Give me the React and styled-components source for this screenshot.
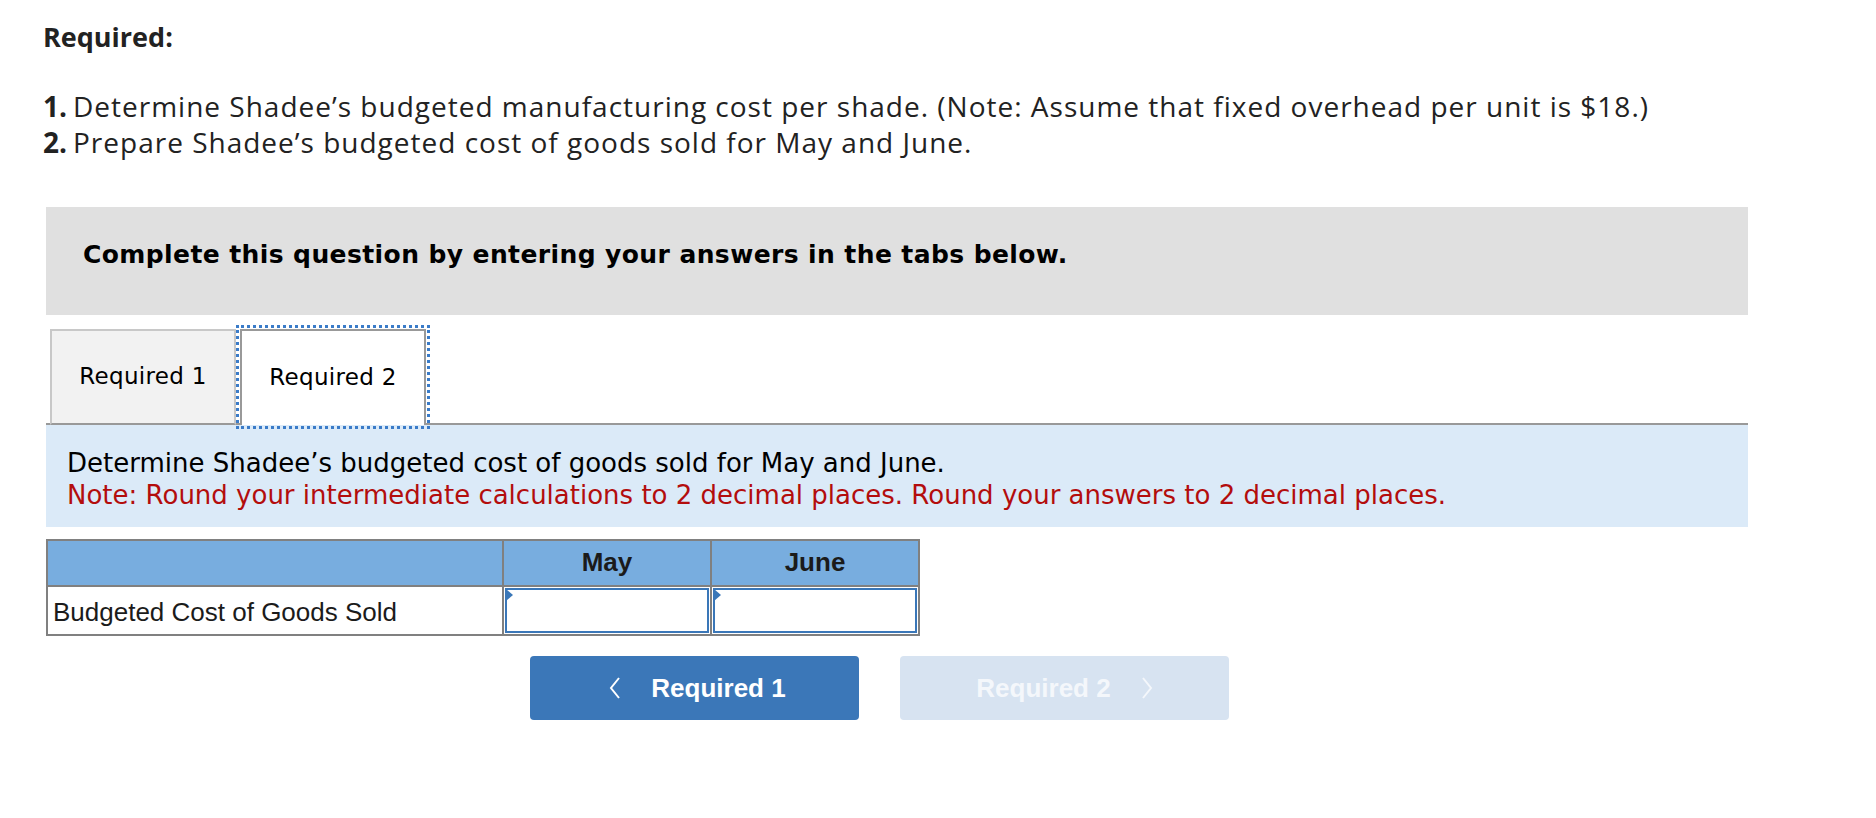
import styled, { createGlobalStyle } from "styled-components";

const Global = createGlobalStyle`
  body {
    margin: 0;
    background: #ffffff;
    font-family: "Open Sans", "Liberation Sans", sans-serif;
    color: #222;
  }
`;

const Page = styled.div`
  width: 1702px;
  padding: 19px 0 0 46px;
`;

// Question text
const Heading = styled.div`
  font-family: "Open Sans", sans-serif;
  font-weight: 700;
  font-size: 27px;
  line-height: 36px;
  margin-left: -3px;
  color: #222;
`;

const List = styled.div`
  margin-top: 33px;
  margin-left: -5px;
  font-family: "Open Sans", sans-serif;
  font-size: 28px;
  line-height: 36px;
  letter-spacing: 1px;
  color: #222;
`;

const Num = styled.b`
  display: inline-block;
  width: 26px;
  text-align: right;
  margin-right: 6px;
  letter-spacing: 0;
`;

// Instruction bar
const Banner = styled.div`
  margin-top: 47px;
  height: 108px;
  box-sizing: border-box;
  background: #e0e0e0;
  display: flex;
  align-items: center;
  padding: 0 0 14px 37px;
  font-family: "DejaVu Sans", Verdana, sans-serif;
  font-weight: 700;
  font-size: 25px;
  letter-spacing: 0.4px;
  color: #000;
`;

// Tabs
const TabBar = styled.div`
  margin-top: 14px;
  display: flex;
  align-items: flex-end;
  border-bottom: 2px solid #999;
  padding-left: 4px;
`;

const Tab = styled.div`
  box-sizing: border-box;
  width: 186px;
  height: 96px;
  margin-bottom: -2px;
  margin-left: ${(p) => (p.active ? "4px" : "0")};
  background: ${(p) => (p.active ? "#fff" : "#f2f2f2")};
  border: 2px solid ${(p) => (p.active ? "#999" : "#c8c8c8")};
  border-bottom: ${(p) => (p.active ? "none" : "2px solid #999")};
  outline: ${(p) => (p.active ? "3px dotted #3a7bc8" : "none")};
  outline-offset: 1px;
  display: flex;
  align-items: center;
  justify-content: center;
  font-family: "DejaVu Sans", Verdana, sans-serif;
  font-size: 23px;
  letter-spacing: 0.3px;
  color: #000;
  padding-bottom: 2px;
`;

const Info = styled.div`
  background: #dbeaf8;
  height: 102px;
  box-sizing: border-box;
  padding: 22px 0 0 21px;
  font-family: "DejaVu Sans", Verdana, sans-serif;
  font-size: 26px;
  line-height: 32px;
  color: #000;
`;

const Note = styled.div`
  color: #b30d0d;
`;

// Answer table
const Table = styled.div`
  margin-top: 12px;
  width: 874px;
  display: grid;
  grid-template-columns: 454px 208px 208px;
  border: 2px solid #808080;
  box-sizing: border-box;
  font-family: "Liberation Sans", Arial, sans-serif;
`;

const HeadCell = styled.div`
  height: 46px;
  box-sizing: border-box;
  background: #78addf;
  border-left: ${(p) => (p.first ? "none" : "2px solid #808080")};
  border-bottom: 2px solid #808080;
  display: flex;
  align-items: center;
  justify-content: center;
  padding-bottom: 2px;
  font-weight: 700;
  font-size: 26px;
  color: #1b1b1b;
`;

const LabelCell = styled.div`
  height: 47px;
  display: flex;
  align-items: center;
  padding: 3px 0 0 5px;
  box-sizing: border-box;
  font-size: 26px;
  color: #1b1b1b;
`;

const InputCell = styled.div`
  position: relative;
  height: 47px;
  border-left: 2px solid #808080;
  padding: 1px;
  box-sizing: border-box;

  &::before {
    content: "";
    position: absolute;
    left: 2px;
    top: 2px;
    border-top: 6px solid transparent;
    border-bottom: 6px solid transparent;
    border-left: 7px solid #3a77b8;
  }
`;

const Field = styled.div`
  height: 100%;
  box-sizing: border-box;
  border: 2px solid #3a77b8;
  background: #fff;
`;

// Navigation buttons
const Nav = styled.div`
  margin-top: 20px;
  display: flex;
  gap: 41px;
  padding-left: 484px;
`;

const NavButton = styled.div`
  width: 329px;
  height: 64px;
  border-radius: 4px;
  background: ${(p) => (p.disabled ? "#d7e3f1" : "#3b77b8")};
  color: ${(p) => (p.disabled ? "#f4f7fb" : "#fff")};
  display: flex;
  align-items: center;
  justify-content: center;
  gap: 30px;
  padding-left: ${(p) => (p.disabled ? "0" : "6px")};
  box-sizing: border-box;
  font-family: "Liberation Sans", Arial, sans-serif;
  font-weight: 700;
  font-size: 26px;
`;

const Chevron = ({ dir }) => (
  <svg width="12" height="24" viewBox="0 0 12 24">
    <polyline
      points={dir === "left" ? "10,2 2,12 10,22" : "2,2 10,12 2,22"}
      fill="none"
      stroke="currentColor"
      strokeWidth="2"
    />
  </svg>
);

const App = () => {
  return (
    <Page>
      <Global />
      <Heading>Required:</Heading>
      <List>
        <div>
          <Num>1.</Num>Determine Shadee’s budgeted manufacturing cost per shade.
          (Note: Assume that fixed overhead per unit is $18.)
        </div>
        <div>
          <Num>2.</Num>Prepare Shadee’s budgeted cost of goods sold for May and
          June.
        </div>
      </List>

      <Banner>Complete this question by entering your answers in the tabs below.</Banner>

      <TabBar>
        <Tab>Required 1</Tab>
        <Tab active>Required 2</Tab>
      </TabBar>

      <Info>
        <div>Determine Shadee’s budgeted cost of goods sold for May and June.</div>
        <Note>
          Note: Round your intermediate calculations to 2 decimal places. Round
          your answers to 2 decimal places.
        </Note>
      </Info>

      <Table>
        <HeadCell first />
        <HeadCell>May</HeadCell>
        <HeadCell>June</HeadCell>
        <LabelCell>Budgeted Cost of Goods Sold</LabelCell>
        <InputCell>
          <Field />
        </InputCell>
        <InputCell>
          <Field />
        </InputCell>
      </Table>

      <Nav>
        <NavButton>
          <Chevron dir="left" />
          Required 1
        </NavButton>
        <NavButton disabled>
          Required 2
          <Chevron dir="right" />
        </NavButton>
      </Nav>
    </Page>
  );
};

export default App;
